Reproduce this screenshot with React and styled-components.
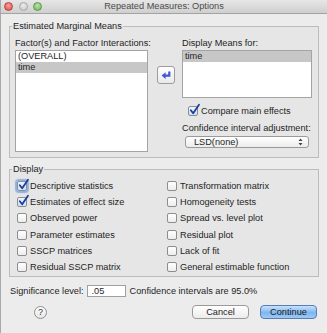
import React from "react";
import styled, { createGlobalStyle } from "styled-components";

const Global = createGlobalStyle`
  html, body { margin: 0; padding: 0; background: #ececec; }
  body { font-family: "Liberation Sans", Arial, sans-serif; font-size: 9.2px; color: #1e1e1e; }
  * { box-sizing: border-box; }
`;

const Window = styled.div`
  width: 327px;
  height: 333px;
  background: #ececec;
  border-left: 1px solid #a9a9a9;
  display: flex;
  flex-direction: column;
  overflow: hidden;
`;

const TitleBar = styled.div`
  height: 14px;
  flex: none;
  background: linear-gradient(#e6e6e6, #cfcfcf);
  border-bottom: 1px solid #a3a3a3;
  display: flex;
  align-items: center;
  position: relative;
  padding-left: 3px;
  gap: 5.5px;
`;

const Light = styled.span`
  width: 9px;
  height: 9px;
  border-radius: 50%;
  flex: none;
  background: ${(p) => p.$bg};
  border: 1px solid ${(p) => p.$edge};
`;

const Title = styled.div`
  position: absolute;
  left: 0;
  right: 0;
  top: 0;
  line-height: 13px;
  text-align: center;
  color: #4b4b4b;
`;

const Content = styled.div`
  padding: 0 8px 0 8px;
  display: flex;
  flex-direction: column;
`;

const Group = styled.fieldset`
  margin: ${(p) => p.$mt}px 0 0 0;
  padding: 0;
  border: 1px solid #bcbcbc;
  background: #e6e6e6;
  min-width: 0;
`;

const Legend = styled.legend`
  margin-left: 2px;
  padding: 0 1px;
  line-height: 11px;
`;

const MeansBody = styled.div`
  display: grid;
  grid-template-columns: 133px 34px 130px;
  padding: 6px 5px 5px 5px;
`;

const Column = styled.div`
  display: flex;
  flex-direction: column;
  align-items: flex-start;
`;

const Label = styled.div`
  line-height: 11px;
  margin-top: ${(p) => p.$mt || 0}px;
  white-space: nowrap;
`;

const ListBox = styled.div`
  width: 100%;
  height: ${(p) => p.$h}px;
  background: #fff;
  border: 1px solid #a4a4a4;
  margin-top: 1px;
`;

const ListItem = styled.div`
  height: 11px;
  line-height: 11px;
  padding-left: 2px;
  background: ${(p) => (p.$selected ? "#c7c7c7" : "transparent")};
`;

const ArrowCol = styled.div`
  padding: 28px 0 0 9px;
`;

const SmallButton = styled.button`
  width: 18px;
  height: 18px;
  padding: 0;
  border: 1px solid #9c9c9c;
  border-radius: 3px;
  background: linear-gradient(#ffffff, #e9e9e9);
  display: flex;
  align-items: center;
  justify-content: center;
`;

const CheckRow = styled.label`
  display: flex;
  align-items: center;
  gap: 3px;
  height: ${(p) => p.$h || 12}px;
  margin-top: ${(p) => p.$mt || 0}px;
  margin-left: ${(p) => p.$ml || 0}px;
  white-space: nowrap;
`;

const Box = styled.span`
  position: relative;
  width: 10px;
  height: 10px;
  flex: none;
  border: 1px solid #8e8e8e;
  border-radius: 2px;
  background: ${(p) => (p.$checked ? "linear-gradient(#eef4fc, #cfe0f5)" : "linear-gradient(#ffffff, #ededed)")};
  box-shadow: ${(p) => (p.$focus ? "0 0 1px 2px rgba(95,150,225,0.65)" : "none")};
`;

const Tick = styled.svg`
  position: absolute;
  left: 0px;
  top: -3px;
  overflow: visible;
`;

const Select = styled.div`
  margin: 2px 0 0 3px;
  width: 124px;
  height: 12px;
  border: 1px solid #9a9a9a;
  border-radius: 3px;
  background: linear-gradient(#ffffff, #ececec);
  display: flex;
  align-items: center;
  justify-content: space-between;
  padding: 0 5px 0 8px;
  line-height: 10px;
`;

const DisplayBody = styled.div`
  display: grid;
  grid-template-columns: 150px 1fr;
  grid-auto-rows: 16.2px;
  padding: 3px 5px 1px 7px;
`;

const Bottom = styled.div`
  display: flex;
  align-items: center;
  gap: 3px;
  margin-top: 8px;
  height: 12px;
  padding-left: 1px;
  white-space: nowrap;
`;

const Input = styled.div`
  width: 39px;
  height: 12px;
  background: #fff;
  border: 1px solid #9f9f9f;
  line-height: 10px;
  padding-left: 4px;
  margin-right: 1px;
`;

const ButtonRow = styled.div`
  display: flex;
  align-items: center;
  margin-top: 8px;
  height: 14px;
`;

const Help = styled.button`
  width: 13px;
  height: 13px;
  margin-left: 25px;
  border-radius: 50%;
  border: 1px solid #8f8f8f;
  background: linear-gradient(#ffffff, #e6e6e6);
  font: inherit;
  font-size: 9px;
  line-height: 11px;
  padding: 0;
  color: #333;
`;

const PushButton = styled.button`
  width: 57px;
  height: 14px;
  padding: 0;
  font: inherit;
  line-height: 12px;
  border-radius: 4px;
  border: 1px solid ${(p) => (p.$primary ? "#5a7db5" : "#9a9a9a")};
  background: ${(p) =>
    p.$primary ? "linear-gradient(#c9e2fb, #7fb6ef 55%, #9dcaf6)" : "linear-gradient(#ffffff, #ececec)"};
  color: #1a1a1a;
  margin-left: ${(p) => p.$ml || 0}px;
`;

function Check({ checked, focus }) {
  return (
    <Box $checked={checked} $focus={focus}>
      {checked && (
        <Tick width="11" height="11" viewBox="0 0 11 11">
          <path d="M1.8 6.2 L4.2 9.2 L10 0.8" fill="none" stroke="#1c3d9c" strokeWidth="1.8" strokeLinecap="round" strokeLinejoin="round" />
        </Tick>
      )}
    </Box>
  );
}

const displayItems = [
  ["Descriptive statistics", true, true],
  ["Transformation matrix", false],
  ["Estimates of effect size", true],
  ["Homogeneity tests", false],
  ["Observed power", false],
  ["Spread vs. level plot", false],
  ["Parameter estimates", false],
  ["Residual plot", false],
  ["SSCP matrices", false],
  ["Lack of fit", false],
  ["Residual SSCP matrix", false],
  ["General estimable function", false],
];

export default function App() {
  return (
    <>
      <Global />
      <Window>
        <TitleBar>
          <Light $bg="radial-gradient(circle at 50% 35%, #f7a09a, #dc4b44)" $edge="#b8433d" />
          <Light $bg="radial-gradient(circle at 50% 35%, #ececec, #c4c4c4)" $edge="#a8a8a8" />
          <Light $bg="radial-gradient(circle at 50% 35%, #b9e3a5, #6fb35a)" $edge="#5b9a4a" />
          <Title>Repeated Measures: Options</Title>
        </TitleBar>
        <Content>
          <Group $mt={7}>
            <Legend>Estimated Marginal Means</Legend>
            <MeansBody>
              <Column>
                <Label>Factor(s) and Factor Interactions:</Label>
                <ListBox $h={102}>
                  <ListItem>(OVERALL)</ListItem>
                  <ListItem $selected>time</ListItem>
                </ListBox>
              </Column>
              <ArrowCol>
                <SmallButton aria-label="move">
                  <svg width="10" height="8" viewBox="0 0 10 8">
                    <path d="M8.3 0.6 V4.6 H4" fill="none" stroke="#4257d4" strokeWidth="2.2" />
                    <path d="M0.6 4.6 L4.6 1.2 L4.6 8 Z" fill="#4257d4" />
                  </svg>
                </SmallButton>
              </ArrowCol>
              <Column>
                <Label>Display Means for:</Label>
                <ListBox $h={48}>
                  <ListItem $selected>time</ListItem>
                </ListBox>
                <CheckRow $mt={7} $ml={6}>
                  <Check checked />
                  Compare main effects
                </CheckRow>
                <Label $mt={6}>Confidence interval adjustment:</Label>
                <Select>
                  <span>LSD(none)</span>
                  <svg width="5" height="8" viewBox="0 0 5 8">
                    <path d="M0.5 3 L2.5 0.5 L4.5 3 Z M0.5 5 L2.5 7.5 L4.5 5 Z" fill="#444" />
                  </svg>
                </Select>
              </Column>
            </MeansBody>
          </Group>
          <Group $mt={6}>
            <Legend>Display</Legend>
            <DisplayBody>
              {displayItems.map(([text, checked, focus]) => (
                <CheckRow key={text} $h={16.2}>
                  <Check checked={checked} focus={focus} />
                  {text}
                </CheckRow>
              ))}
            </DisplayBody>
          </Group>
          <Bottom>
            <span>Significance level:</span>
            <Input>.05</Input>
            <span>Confidence intervals are 95.0%</span>
          </Bottom>
          <ButtonRow>
            <Help>?</Help>
            <PushButton $ml={145}>Cancel</PushButton>
            <PushButton $primary $ml={11}>Continue</PushButton>
          </ButtonRow>
        </Content>
      </Window>
    </>
  );
}
